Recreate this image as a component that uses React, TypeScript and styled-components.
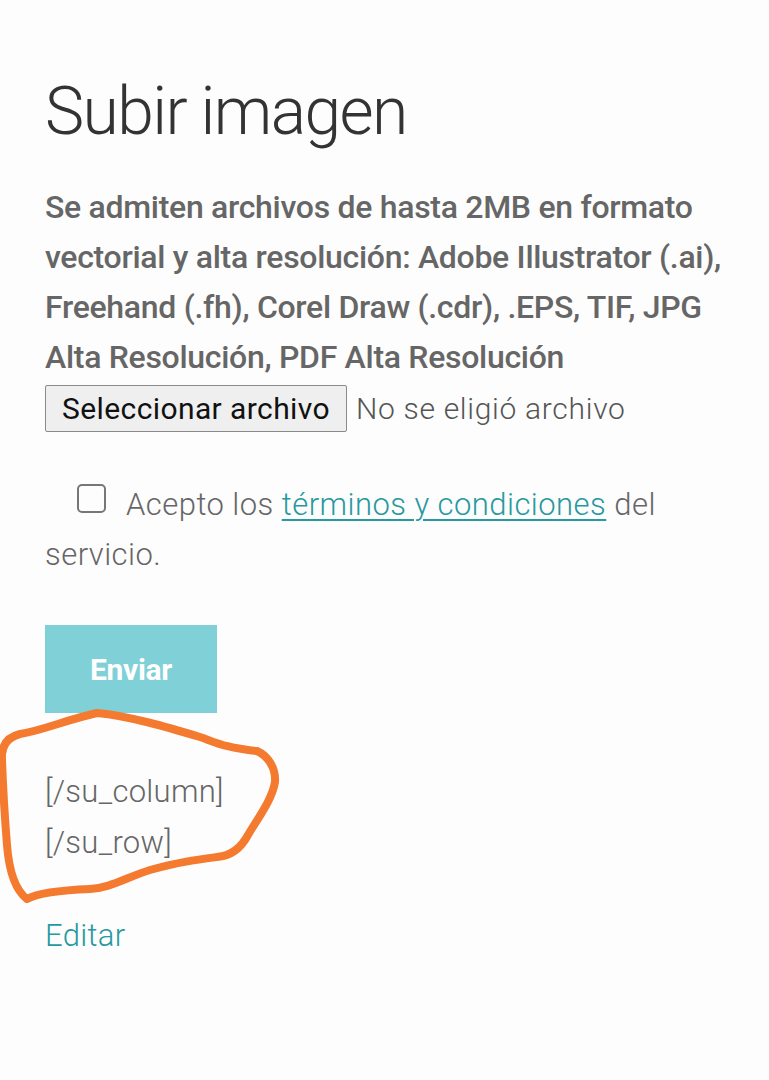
import * as React from 'react'
import styled, { createGlobalStyle } from 'styled-components'

const GlobalStyle = createGlobalStyle`
  html, body {
    margin: 0;
    padding: 0;
    background: #fdfdfd;
  }
  body {
    font-family: Roboto, 'Liberation Sans', sans-serif;
  }
`

const Page = styled.div`
  position: relative;
  width: 769px;
  height: 1080px;
  padding: 0 45px;
  box-sizing: border-box;
  overflow: hidden;
`

const Title = styled.h1`
  margin: 0;
  padding-top: 72px;
  font-size: 66px;
  line-height: 80px;
  font-weight: 300;
  color: #333;
  letter-spacing: -1.6px;
`

const Lead = styled.p`
  margin: 30px 0 0;
  font-size: 32px;
  line-height: 50px;
  font-weight: 500;
  color: #666;
  letter-spacing: -0.3px;
`

const FileRow = styled.div`
  display: flex;
  align-items: center;
  gap: 9px;
  margin-top: 3px;
`

const FileButton = styled.label`
  display: flex;
  align-items: center;
  height: 47px;
  padding: 0 16px;
  box-sizing: border-box;
  border: 1px solid #8a8a8a;
  border-radius: 2px;
  background: #efefef;
  font-size: 30px;
  letter-spacing: 0.4px;
  color: #111;
`

const FileName = styled.span`
  font-size: 30px;
  font-weight: 300;
  letter-spacing: 0.7px;
  color: #555;
`

const Terms = styled.p`
  margin: 48px 0 0;
  font-size: 31px;
  line-height: 50px;
  font-weight: 300;
  letter-spacing: 0.45px;
  color: #666;
`

const Check = styled.span`
  display: inline-block;
  width: 25px;
  height: 25px;
  margin: 0 20px 0 32px;
  border: 2px solid #777;
  border-radius: 5px;
  vertical-align: 2px;
`

const Link = styled.a<{ $underline?: boolean }>`
  color: #27999f;
  text-decoration: ${p => (p.$underline ? 'underline' : 'none')};
  text-decoration-thickness: 2px;
  text-underline-offset: 4px;
`

const SendButton = styled.button`
  display: block;
  margin-top: 45px;
  width: 172px;
  height: 88px;
  border: none;
  background: #80d0d8;
  color: #fff;
  font-family: inherit;
  font-size: 30px;
  font-weight: 700;
  letter-spacing: -0.3px;
`

const Shortcodes = styled.div`
  margin-top: 53px;
  font-size: 31px;
  line-height: 51px;
  font-weight: 300;
  letter-spacing: 0.3px;
  color: #666;
`

const EditRow = styled.div`
  margin-top: 43px;
  font-size: 31px;
  line-height: 50px;
  font-weight: 300;
  letter-spacing: 0.3px;
`

const Scribble = styled.svg`
  position: absolute;
  top: 0;
  left: 0;
  pointer-events: none;
`

export default function App() {
  return (
    <Page>
      <GlobalStyle />
      <Title>Subir imagen</Title>
      <Lead>
        Se admiten archivos de hasta 2MB en formato vectorial y alta resolución: Adobe
        Illustrator (.ai), Freehand (.fh), Corel Draw (.cdr), .EPS, TIF, JPG Alta
        Resolución, PDF Alta Resolución
      </Lead>
      <FileRow>
        <FileButton>Seleccionar archivo</FileButton>
        <FileName>No se eligió archivo</FileName>
      </FileRow>
      <Terms>
        <Check />
        Acepto los <Link $underline href="#">términos y condiciones</Link> del servicio.
      </Terms>
      <SendButton>Enviar</SendButton>
      <Shortcodes>
        <div>[/su_column]</div>
        <div>[/su_row]</div>
      </Shortcodes>
      <EditRow>
        <Link href="#">Editar</Link>
      </EditRow>
      <Scribble width="769" height="1080" viewBox="0 0 769 1080">
        <path
          d="M97 713 C130 716 170 728 200 737 C215 742 225 748 257 751 C268 756 276 768 275 782 C272 800 258 818 248 835 C240 850 230 856 217 857 C195 860 180 862 150 870 C125 878 110 888 90 889 C65 890 40 892 27 899 C15 890 9 870 7 845 C5 820 3 790 2 760 C1 745 8 737 20 734 C45 730 65 720 97 713 Z"
          fill="none"
          stroke="#f47a30"
          strokeWidth="8"
          strokeLinejoin="round"
          strokeLinecap="round"
        />
      </Scribble>
    </Page>
  )
}
